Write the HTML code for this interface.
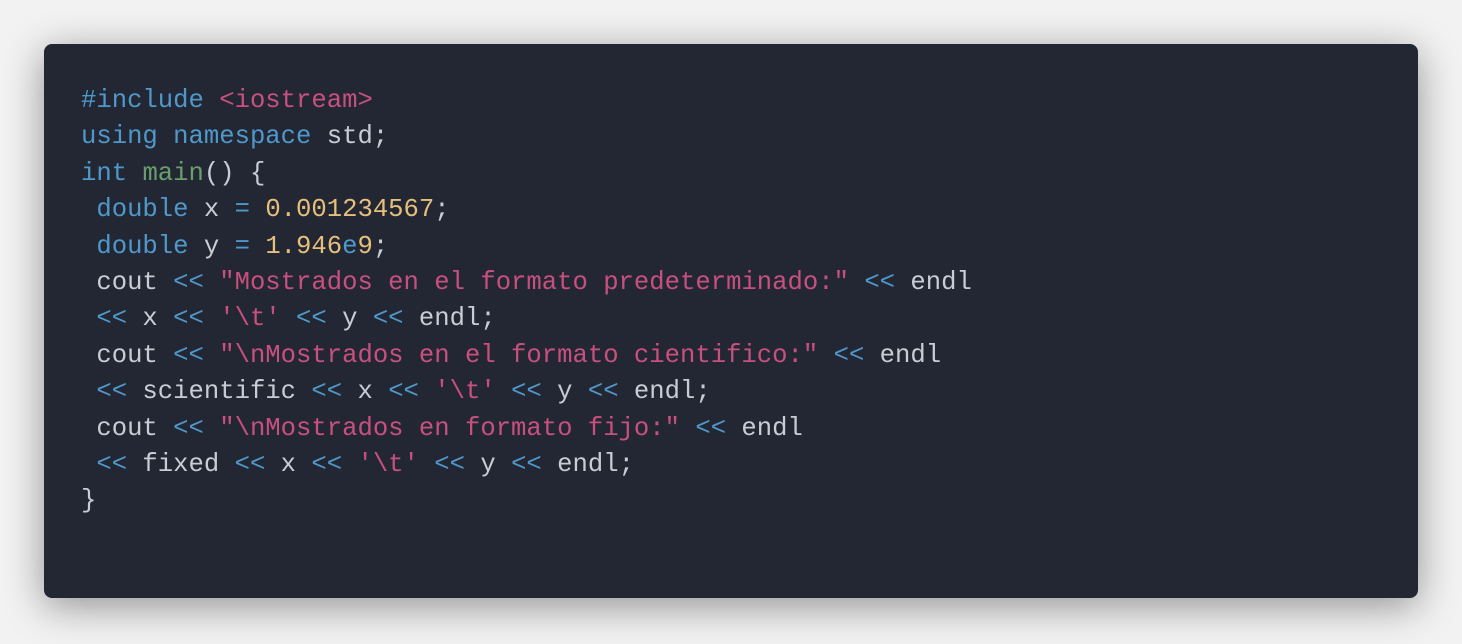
<!DOCTYPE html>
<html><head><meta charset="utf-8"><style>
html,body{margin:0;padding:0;}
body{width:1462px;height:644px;background:#f2f2f2;position:relative;overflow:hidden;}
.card{position:absolute;left:44px;top:44px;width:1374px;height:554px;background:#232733;border-radius:8px;box-shadow:0 8px 40px rgba(0,0,0,0.4);}
pre{position:absolute;left:37px;top:39px;margin:0;font-family:"Liberation Mono",monospace;font-size:25.6px;line-height:36.4px;color:#c9ccd4;white-space:pre;}
.k{color:#4f98ca}.s{color:#c8507f}.n{color:#e6c07b}.f{color:#6a9f6d}
</style></head><body><div class="card"><pre><span class="k">#include</span> <span class="s">&lt;iostream&gt;</span>
<span class="k">using</span> <span class="k">namespace</span> std;
<span class="k">int</span> <span class="f">main</span>() {
 <span class="k">double</span> x <span class="k">=</span> <span class="n">0.001234567</span>;
 <span class="k">double</span> y <span class="k">=</span> <span class="n">1.946</span><span class="k">e</span><span class="n">9</span>;
 cout <span class="k">&lt;&lt;</span> <span class="s">"Mostrados en el formato predeterminado:"</span> <span class="k">&lt;&lt;</span> endl
 <span class="k">&lt;&lt;</span> x <span class="k">&lt;&lt;</span> <span class="s">'\t'</span> <span class="k">&lt;&lt;</span> y <span class="k">&lt;&lt;</span> endl;
 cout <span class="k">&lt;&lt;</span> <span class="s">"\nMostrados en el formato cientifico:"</span> <span class="k">&lt;&lt;</span> endl
 <span class="k">&lt;&lt;</span> scientific <span class="k">&lt;&lt;</span> x <span class="k">&lt;&lt;</span> <span class="s">'\t'</span> <span class="k">&lt;&lt;</span> y <span class="k">&lt;&lt;</span> endl;
 cout <span class="k">&lt;&lt;</span> <span class="s">"\nMostrados en formato fijo:"</span> <span class="k">&lt;&lt;</span> endl
 <span class="k">&lt;&lt;</span> fixed <span class="k">&lt;&lt;</span> x <span class="k">&lt;&lt;</span> <span class="s">'\t'</span> <span class="k">&lt;&lt;</span> y <span class="k">&lt;&lt;</span> endl;
}</pre></div></body></html>
